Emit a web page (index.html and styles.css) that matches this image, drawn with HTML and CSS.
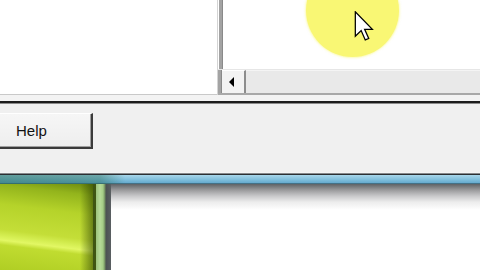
FILE: index.html
```html
<!DOCTYPE html>
<html>
<head>
<meta charset="utf-8">
<link rel="stylesheet" href="styles.css">
</head>
<body>
<div class="screen">
  <div class="top">
    <div class="pane-left"></div>
    <div class="pane-right">
      <div class="pane-content"></div>
      <div class="hscroll">
        <div class="sb-btn"><span class="tri"></span></div>
        <div class="sb-track"></div>
      </div>
    </div>
  </div>
  <div class="gap"></div>
  <div class="rule"></div>
  <div class="dialog">
    <button class="btn">Help</button>
  </div>
  <div class="edge"></div>
  <div class="taskbar"></div>
  <div class="desk">
    <div class="green"></div>
    <div class="stripe-light"></div>
    <div class="stripe-dark"></div>
    <div class="window"></div>
  </div>
  <div class="highlight"></div>
  <svg class="cursor" width="20" height="30" viewBox="0 0 12 19">
    <path d="M0.5 0.5 L0.5 16 L4.2 12.4 L6.8 18.3 L9 17.4 L6.4 11.6 L11.3 11.6 Z" fill="#fff" stroke="#000" stroke-width="0.8" stroke-linejoin="miter"/>
  </svg>
</div>
</body>
</html>
```
FILE: styles.css
```css
html, body {
  margin: 0;
  padding: 0;
}
body {
  width: 480px;
  height: 270px;
  overflow: hidden;
  background: #fff;
  font-family: "Liberation Sans", Arial, sans-serif;
}
.screen {
  position: relative;
  width: 480px;
  height: 270px;
  display: flex;
  flex-direction: column;
  overflow: hidden;
}
.top {
  height: 95px;
  display: flex;
  flex-shrink: 0;
}
.pane-left {
  width: 217px;
  background: #fff;
  border-bottom: 1px solid #c9c9c9;
  box-sizing: border-box;
}
.pane-right {
  flex: 1;
  display: flex;
  flex-direction: column;
  border-left: 1px solid #d4d4d4;
  box-sizing: border-box;
  background: #fff;
}
.pane-content {
  flex: 1;
  border-left: 1px solid #fff;
  box-shadow: inset 3px 0 0 #a3a3a3, inset 4px 0 0 #8a8a8a;
}
.hscroll {
  height: 26px;
  display: flex;
  box-sizing: border-box;
  border-top: 1px solid #e6e6e6;
  border-bottom: 2px solid #a8a8a8;
  background: #eaeaea;
  box-shadow: inset 3px 0 0 #a3a3a3, inset 4px 0 0 #8a8a8a;
}
.sb-btn {
  width: 24px;
  margin-left: 4px;
  background: #f3f3f3;
  border-top: 1px solid #fff;
  border-right: 2px solid #8d8d8d;
  box-sizing: border-box;
  display: flex;
  align-items: center;
  justify-content: center;
}
.tri {
  width: 0;
  height: 0;
  border-top: 5px solid transparent;
  border-bottom: 5px solid transparent;
  border-right: 5px solid #000;
  margin-right: 3px;
}
.sb-track {
  flex: 1;
  background: #e9e9e9;
  border-top: 1px solid #f4f4f4;
}
.gap {
  height: 6px;
  background: #f3f3f3;
  flex-shrink: 0;
}
.rule {
  height: 2px;
  background: #1c1c1c;
  border-bottom: 1px solid #8a8a8a;
  flex-shrink: 0;
}
.dialog {
  height: 68px;
  background: #f0f0f0;
  flex-shrink: 0;
  padding-top: 9px;
  box-sizing: border-box;
}
.btn {
  display: block;
  margin-left: -6px;
  width: 99px;
  height: 36px;
  background: linear-gradient(#f6f6f6, #eeeeee);
  border: 1px solid #fff;
  border-right: 2px solid #3a3a3a;
  border-bottom: 2px solid #3a3a3a;
  box-shadow: inset -1px -1px 0 #a0a0a0;
  box-sizing: border-box;
  font-family: "Liberation Sans", Arial, sans-serif;
  font-size: 15px;
  color: #111;
  padding: 0 0 1px 21px;
  text-align: left;
}
.edge {
  height: 3px;
  background: linear-gradient(#ffffff, #e8e8e8 33%, #2b2f33 66%, #2b2f33);
  flex-shrink: 0;
}
.taskbar {
  height: 9px;
  flex-shrink: 0;
  background:
    linear-gradient(90deg, rgba(40,110,90,0.55), rgba(40,110,90,0.45) 100px, rgba(40,110,90,0) 125px),
    linear-gradient(#a8d6ea, #80bfdc 50%, #68acd0 85%, #2d4f5e);
}
.desk {
  flex: 1;
  display: flex;
}
.green {
  width: 93px;
  background:
    linear-gradient(90deg, rgba(0,0,0,0) 86%, rgba(40,60,0,0.55)),
    linear-gradient(187deg, #6d8a10 0%, #93b41c 12%, #b5d32a 32%, #c4de38 58%, #d6ef54 65%, #e2f764 69%, #c0dc30 74%, #b0ce24 100%);
}
.stripe-light {
  width: 3px;
  background: #3f5512;
}
.stripe-dark {
  width: 15px;
  background: linear-gradient(90deg, #9cc27a 0, #b6da98 4px, #a4cc86 7px, #6e8a5e 9px, #4b5152 10px, #5a5f62 15px);
}
.window {
  flex: 1;
  background: linear-gradient(#5e6266, #9a9a9c 6px, #c8c8ca 12px, #ececec 18px, #fff 26px);
}
.highlight {
  position: absolute;
  left: 306px;
  top: -36px;
  width: 93px;
  height: 93px;
  border-radius: 50%;
  background: #f9f774;
  box-shadow: 0 0 2px 1px rgba(249,247,116,0.5);
}
.cursor {
  position: absolute;
  left: 354px;
  top: 11px;
}
```
